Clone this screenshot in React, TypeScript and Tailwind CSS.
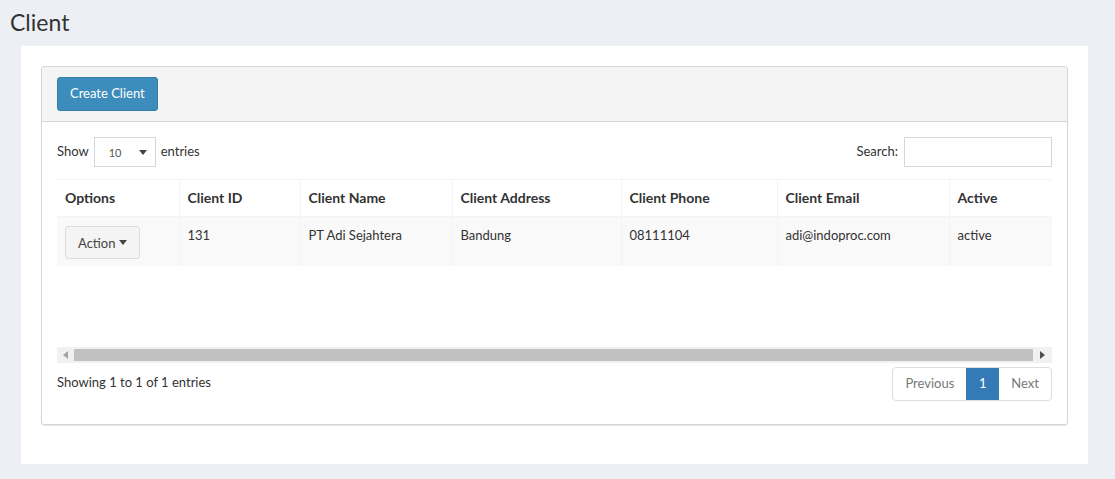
const columns = [
    {label: "Options", width: 122},
    {label: "Client ID", width: 121},
    {label: "Client Name", width: 152},
    {label: "Client Address", width: 169},
    {label: "Client Phone", width: 156},
    {label: "Client Email", width: 172},
    {label: "Active", width: 130},
];

const rows = [
    {id: "131", name: "PT Adi Sejahtera", address: "Bandung", phone: "08111104", email: "adi@indoproc.com", active: "active"},
];

function Caret({className = ""}: {className?: string}) {
    return (
        <svg width="8" height="5" viewBox="0 0 8 5" className={className}>
            <path d="M0 0h8L4 5z" fill="currentColor"/>
        </svg>
    );
}

function FakeScrollbar() {
    return (
        <div className="flex items-center h-[16px] bg-[#f1f1f1]">
            <div className="w-[17px] flex justify-center">
                <svg width="5" height="8" viewBox="0 0 5 8"><path d="M5 0v8L0 4z" fill="#a3a3a3"/></svg>
            </div>
            <div className="flex-1 h-[12px] bg-[#c1c1c1]"></div>
            <div className="w-[19px] flex justify-center">
                <svg width="5" height="8" viewBox="0 0 5 8"><path d="M0 0v8l5-4z" fill="#505050"/></svg>
            </div>
        </div>
    );
}

export default function App() {
    return (
        <div className="min-h-screen bg-[#ecf0f5] font-['Lato','Liberation_Sans',sans-serif] text-[13px] text-[#333]">
            <h1 className="h-[46px] px-[10px] pt-[6px] text-[23px] leading-[32px] text-[#333]">Client</h1>
            <div className="ml-[21px] w-[1067px] h-[418px] bg-white px-[20px] pt-[20px]">
                <div className="rounded-[3px] border border-[#d2d6de] shadow-[0_1px_1px_rgba(0,0,0,0.1)] bg-white">
                    <div className="h-[55px] bg-[#f4f4f4] border-b border-[#d2d6de] px-[15px] pt-[10px] rounded-t-[3px]">
                        <button className="h-[34px] px-[12px] rounded-[3px] bg-[#3c8dbc] border border-[#367fa9] text-white text-[13px]">
                            Create Client
                        </button>
                    </div>
                    <div className="px-[15px] pt-[15px] pb-[23px]">
                        <div className="flex items-center justify-between h-[30px]">
                            <div className="flex items-center gap-[5px] leading-[20px]">
                                <span className="-mt-[3px]">Show</span>
                                <div className="flex items-center justify-between w-[62px] h-[30px] border border-[#d2d6de] pl-[14px] pr-[8px] text-[11px] text-[#555]">
                                    <span className="pt-[2px]">10</span>
                                    <Caret className="text-[#444]"/>
                                </div>
                                <span className="-mt-[3px]">entries</span>
                            </div>
                            <div className="flex items-center gap-[6px] leading-[20px]">
                                <span className="-mt-[3px]">Search:</span>
                                <div className="w-[148px] h-[30px] border border-[#d2d6de]"></div>
                            </div>
                        </div>

                        <div className="mt-[12px] w-[995px] overflow-hidden">
                            <div className="h-[168px]">
                                <table className="table-fixed border-collapse" style={{width: columns.reduce((s, c) => s + c.width, 0)}}>
                                    <colgroup>
                                        {columns.map(c => <col key={c.label} style={{width: c.width}}/>)}
                                    </colgroup>
                                    <thead>
                                        <tr className="h-[37px] border-t border-[#f4f4f4]">
                                            {columns.map((c, i) => (
                                                <th key={c.label} className={"text-left text-[14px] font-bold px-[8px] pb-[2px] align-middle border-b border-[#f4f4f4] " + (i > 0 ? "border-l border-l-[#f4f4f4]" : "")}>
                                                    {c.label}
                                                </th>
                                            ))}
                                        </tr>
                                    </thead>
                                    <tbody>
                                        {rows.map(r => (
                                            <tr key={r.id} className="h-[49px] bg-[#f9f9f9] leading-[20px]">
                                                <td className="px-[8px] pt-[9px] pb-[7px] align-top">
                                                    <button className="flex items-center gap-[4px] h-[33px] px-[12px] rounded-[3px] border border-[#ddd] bg-[#f4f4f4] text-[#444]">
                                                        Action <Caret/>
                                                    </button>
                                                </td>
                                                <td className="px-[8px] pt-[8px] align-top border-l border-[#f4f4f4]">{r.id}</td>
                                                <td className="px-[8px] pt-[8px] align-top border-l border-[#f4f4f4]">{r.name}</td>
                                                <td className="px-[8px] pt-[8px] align-top border-l border-[#f4f4f4]">{r.address}</td>
                                                <td className="px-[8px] pt-[8px] align-top border-l border-[#f4f4f4]">{r.phone}</td>
                                                <td className="px-[8px] pt-[8px] align-top border-l border-[#f4f4f4]">{r.email}</td>
                                                <td className="px-[8px] pt-[8px] align-top border-l border-[#f4f4f4]">{r.active}</td>
                                            </tr>
                                        ))}
                                    </tbody>
                                </table>
                            </div>
                            <FakeScrollbar/>
                        </div>

                        <div className="flex items-center justify-between mt-[4px]">
                            <div className="-mt-[2px]">Showing 1 to 1 of 1 entries</div>
                            <div className="flex h-[34px] rounded-[4px] border border-[#ddd] overflow-hidden">
                                <span className="flex items-center px-[12px] text-[#777]">Previous</span>
                                <span className="flex items-center justify-center w-[33px] bg-[#337ab7] text-white">1</span>
                                <span className="flex items-center px-[12px] text-[#777]">Next</span>
                            </div>
                        </div>
                    </div>
                </div>
            </div>
        </div>
    );
}
